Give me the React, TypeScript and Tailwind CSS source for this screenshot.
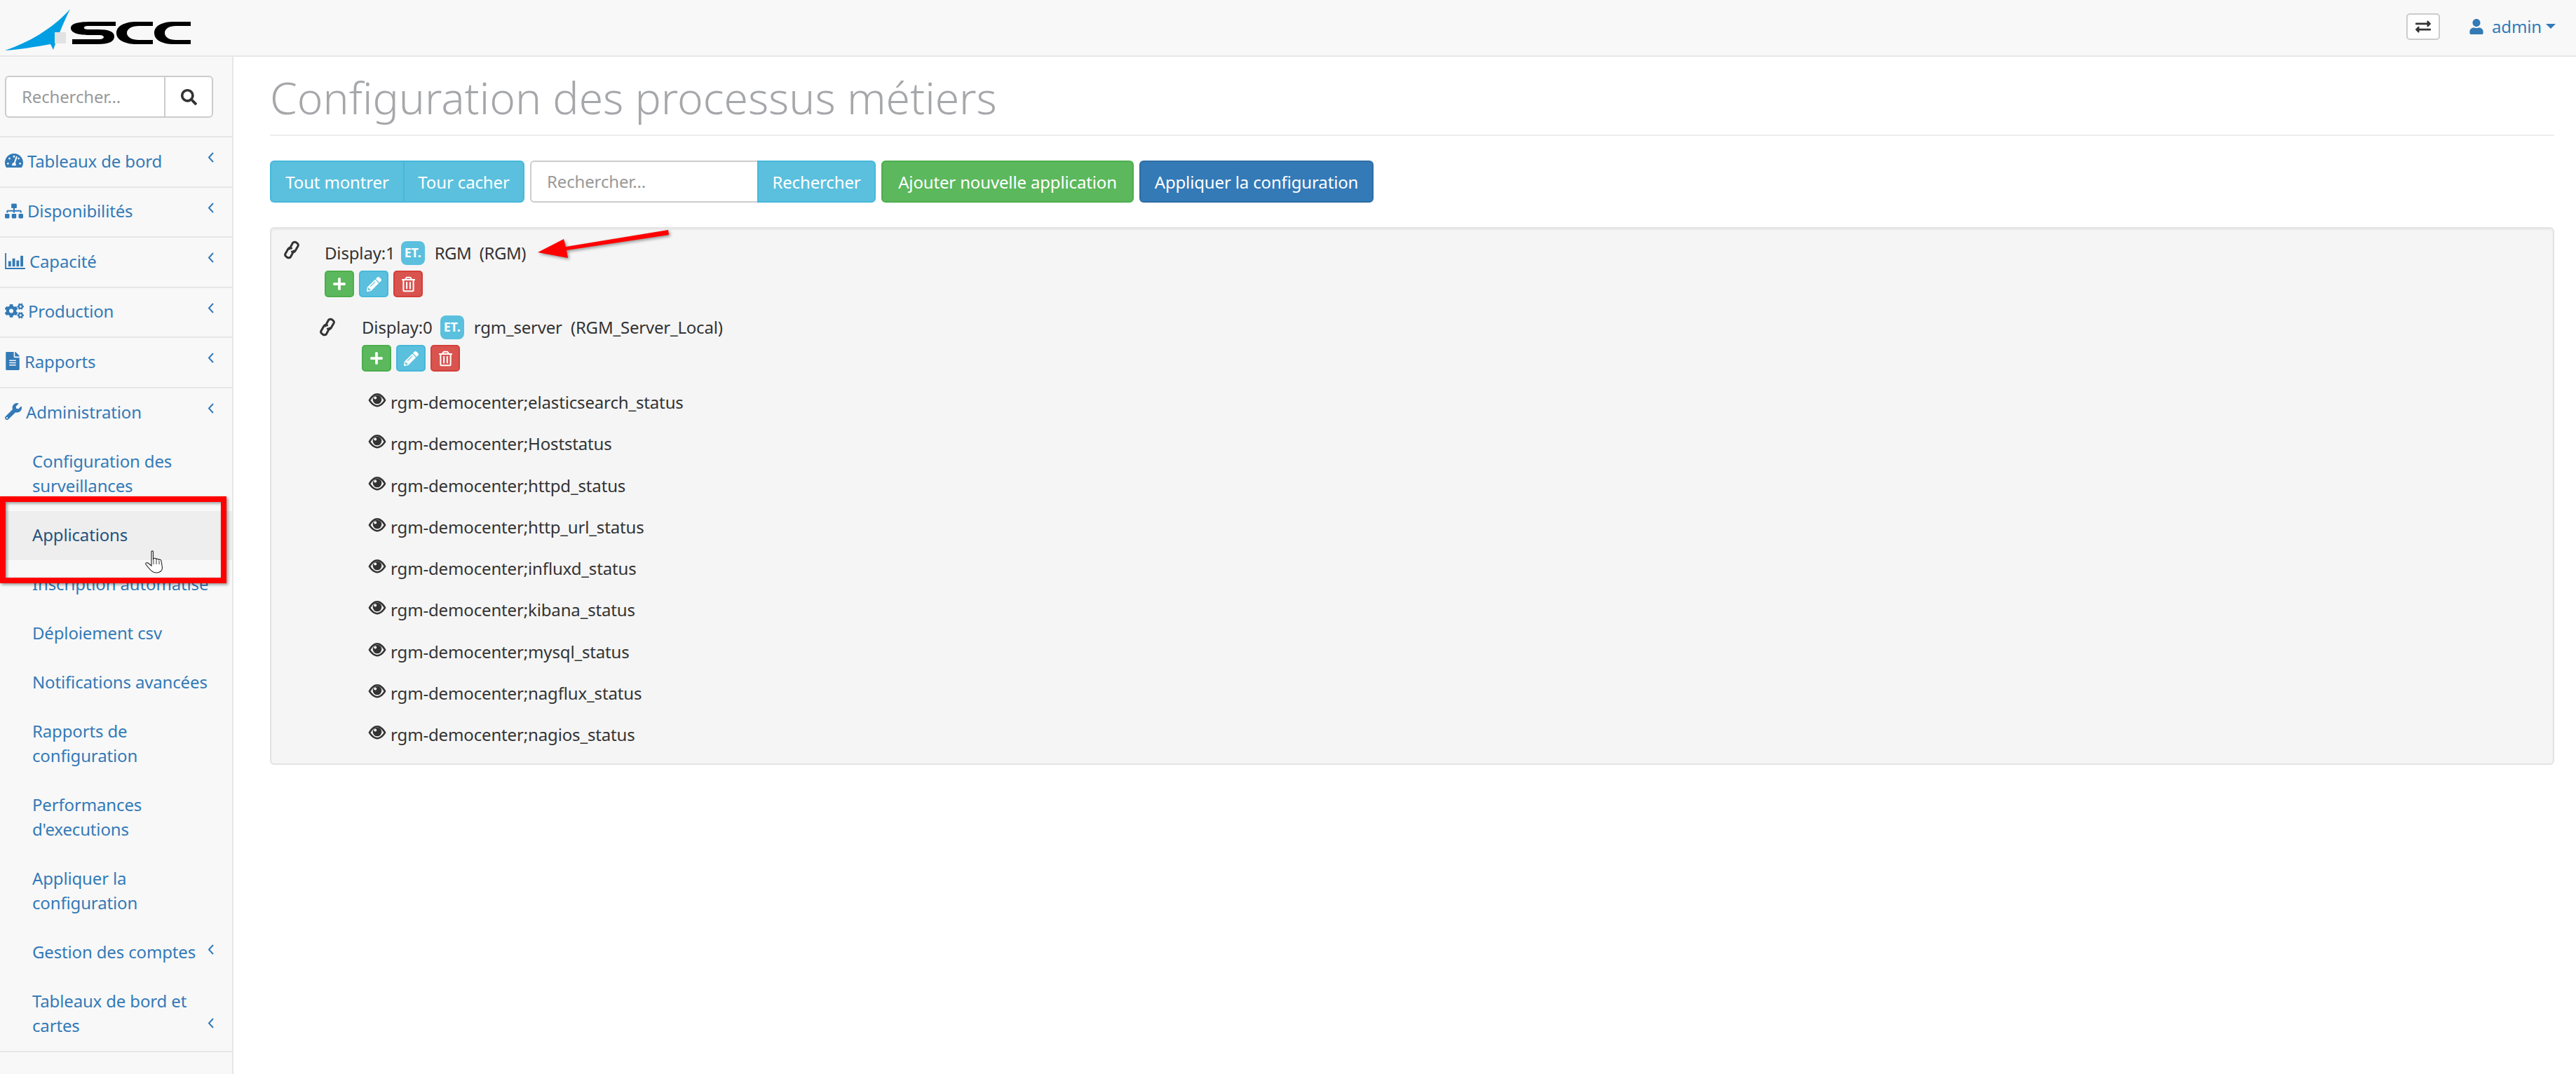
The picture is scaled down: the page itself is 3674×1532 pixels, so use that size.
import React from "react";
import {
  FaTachometerAlt, FaSitemap, FaCogs, FaFileAlt, FaWrench, FaSearch, FaUser, FaExchangeAlt,
  FaPlus, FaPencilAlt, FaRegTrashAlt,
} from "react-icons/fa";

const font = { fontFamily: '"Noto Sans", sans-serif' };

function BarIcon({ className }: { className?: string }) {
  return (
    <svg viewBox="0 0 30 24" className={className} fill="currentColor">
      <path d="M0 0h2v22h28v2H0z" />
      <rect x="5" y="12" width="4" height="8" />
      <rect x="11" y="8" width="4" height="12" />
      <rect x="17" y="11" width="4" height="9" />
      <rect x="23" y="4" width="4" height="16" />
    </svg>
  );
}

function Angle({ className }: { className?: string }) {
  return (
    <svg viewBox="0 0 9 15" className={`w-[9px] h-[15px] ${className ?? ""}`} fill="none" stroke="#337ab7" strokeWidth="2">
      <path d="M8 1 L2 7.5 L8 14" />
    </svg>
  );
}

function ChainIcon({ className }: { className?: string }) {
  return (
    <svg viewBox="0 0 22 27" className={`w-[22px] h-[27px] shrink-0 ${className ?? ""}`} fill="none" stroke="#333333" strokeWidth="3" strokeLinecap="round">
      <path d="M8 12 L12.5 3.5 Q14 1.5 17 2.5 L19.5 4.5 Q21 6 20 8 L16 15 Q14.5 17.5 11.5 16" />
      <path d="M14 15 L9.5 23.5 Q8 25.5 5 24.5 L2.5 22.5 Q1 21 2 19 L6 12 Q7.5 9.5 10.5 11" />
    </svg>
  );
}

function EyeIcon() {
  return (
    <svg viewBox="0 0 26 21" className="w-[26px] h-[21px] shrink-0 -mt-[6px]">
      <path d="M0.5 11 C4 4 9 1 13 1 C17 1 22 4 25.5 11 C22 17 17 20.5 13 20.5 C9 20.5 4 17 0.5 11Z" fill="#333333" />
      <path d="M3.5 11 C6.5 6 10 3.5 13 3.5 C16 3.5 19.5 6 22.5 11 C19.5 15.5 16 18 13 18 C10 18 6.5 15.5 3.5 11Z" fill="#f5f5f5" />
      <circle cx="13" cy="10" r="6.3" fill="#333333" />
      <circle cx="10.2" cy="7.6" r="2" fill="#f5f5f5" />
    </svg>
  );
}

function Logo() {
  return (
    <svg viewBox="0 0 280 70" className="w-[280px] h-[70px] shrink-0">
      <path d="M100 8 C90 28 82 48 76 66 L72 58 C50 62 25 66 7 67 C40 56 75 36 100 8Z" fill="#009fe3" />
      <rect x="78" y="41" width="16" height="16" fill="#e2e2e2" />
      <path d="M165 26 H130 C110 26 101 29 101 35 C101 42 112 45 128 45 H142 C150 45 150 51 142 51 H103 V58 H140 C156 58 163 54 163 47 C163 40 155 37 140 37 H125 C118 37 118 32 125 32 H165Z" fill="#000" />
      <path d="M218 26 H195 C178 26 166 32 166 42 C166 52 178 58 195 58 H218 V52 H198 C188 52 181 48 181 42 C181 36 188 32 198 32 H218Z" fill="#000" />
      <path d="M272 26 H248 C231 26 220 32 220 42 C220 52 231 58 248 58 H272 V52 H251 C241 52 235 48 235 42 C235 36 241 32 251 32 H272Z" fill="#000" />
    </svg>
  );
}

function TopItem({ icon, label }: { icon: React.ReactNode; label: string }) {
  return (
    <div className="h-[71.5px] pl-[7px] pr-[26px] pb-[3px] flex items-center justify-between text-[#337ab7] border-b-2 border-[#e7e7e7]">
      <span className="flex items-center gap-[6px]">
        {icon}
        <span>{label}</span>
      </span>
      <Angle className="-mt-[9px]" />
    </div>
  );
}

function SubItem({ children, active, chevron }: { children: React.ReactNode; active?: boolean; chevron?: boolean }) {
  return (
    <div className={`relative pl-[46px] pt-[16px] pb-[19px] leading-[35px] ${active ? "bg-[#eeeeee] text-[#23527c]" : "text-[#337ab7]"}`}>
      <div className="w-[262px]">{children}</div>
      {chevron && <Angle className="absolute right-[26px] bottom-[32px]" />}
    </div>
  );
}

function Sidebar() {
  return (
    <aside className="w-[333px] shrink-0 bg-[#f8f8f8] border-r-2 border-[#e7e7e7] relative">
      <div className="h-[115px] border-b-2 border-[#e7e7e7] px-[7px] pt-[27px]">
        <div className="flex h-[60px] w-[297px]">
          <div className="flex-1 bg-white border-2 border-[#cccccc] rounded-l-[6px] pl-[22px] pb-[2px] flex items-center text-[#999999]">Rechercher...</div>
          <div className="w-[68px] bg-white border-2 border-l-0 border-[#cccccc] rounded-r-[6px] flex items-center justify-center text-[#333333]">
            <FaSearch className="w-[23px] h-[23px]" />
          </div>
        </div>
      </div>
      <TopItem icon={<FaTachometerAlt className="w-[26px] h-[26px]" />} label="Tableaux de bord" />
      <TopItem icon={<FaSitemap className="w-[26px] h-[26px]" />} label="Disponibilités" />
      <TopItem icon={<BarIcon className="w-[29px] h-[23px]" />} label="Capacité" />
      <TopItem icon={<FaCogs className="w-[27px] h-[25px]" />} label="Production" />
      <TopItem icon={<FaFileAlt className="w-[22px] h-[26px]" />} label="Rapports" />
      <div className="h-[70.5px] pl-[7px] pr-[26px] pb-[3px] flex items-center justify-between text-[#337ab7]">
        <span className="flex items-center gap-[6px]">
          <FaWrench className="w-[24px] h-[24px]" />
          <span>Administration</span>
        </span>
        <Angle className="-mt-[9px]" />
      </div>
      <div className="border-b-2 border-[#e7e7e7]">
        <SubItem>Configuration des surveillances</SubItem>
        <SubItem active>Applications</SubItem>
        <SubItem>Inscription automatisé</SubItem>
        <SubItem>Déploiement csv</SubItem>
        <SubItem>Notifications avancées</SubItem>
        <SubItem>Rapports de configuration</SubItem>
        <SubItem>Performances d'executions</SubItem>
        <SubItem>Appliquer la configuration</SubItem>
        <SubItem chevron>Gestion des comptes</SubItem>
        <SubItem chevron>Tableaux de bord et cartes</SubItem>
      </div>
      {/* annotation: red frame */}
      <div className="absolute left-0 top-[627px] w-[323px] h-[124px] border-[8px] border-[#ff0000] shadow-[2px_2px_4px_rgba(0,0,0,0.4),inset_2px_2px_4px_rgba(0,0,0,0.4)]" />
      {/* annotation: cursor */}
      <svg viewBox="0 0 26 33" className="absolute left-[207px] top-[704px] w-[26px] h-[33px]">
        <path d="M9 2 C9 0.5 11.5 0.5 11.5 2 V13 L12.5 12 C13 11 15.5 11 15.8 12.5 C16.5 11.8 19 12 19.3 13.5 C20 12.8 22.8 13 23 15 L24.5 25 C24.5 29 21 32 16 32 C11 32 8 29 5 25 L1 20 C0 18 2 17 4 18 L9 22Z" fill="#fff" stroke="#222" strokeWidth="1.1" />
        <path d="M12 14v6M16 13v7M20 15v5" stroke="#222" strokeWidth="0.9" fill="none" />
      </svg>
    </aside>
  );
}

function Btn({ color, children }: { color: "green" | "blue" | "red"; children: React.ReactNode }) {
  const cls =
    color === "green"
      ? "bg-[#5cb85c] border-[#4cae4c]"
      : color === "blue"
      ? "bg-[#5bc0de] border-[#46b8da]"
      : "bg-[#d9534f] border-[#d43f3a]";
  return <span className={`w-[42px] h-[38px] rounded-[5px] border-2 flex items-center justify-center text-white ${cls}`}>{children}</span>;
}

function Actions() {
  return (
    <div className="flex gap-[7px]">
      <Btn color="green"><FaPlus className="w-[20px] h-[20px]" /></Btn>
      <Btn color="blue"><FaPencilAlt className="w-[21px] h-[21px]" /></Btn>
      <Btn color="red"><FaRegTrashAlt className="w-[19px] h-[23px]" /></Btn>
    </div>
  );
}

function Badge() {
  return (
    <span className="w-[34px] h-[34px] rounded-[8px] bg-[#5bc0de] text-white text-[18px] font-bold flex items-center justify-center">ET.</span>
  );
}

const services = [
  "elasticsearch_status", "Hoststatus", "httpd_status", "http_url_status", "influxd_status",
  "kibana_status", "mysql_status", "nagflux_status", "nagios_status",
];

function Tree() {
  return (
    <div className="bg-[#f5f5f5] border-2 border-[#e3e3e3] rounded-[6px] h-[767px] pl-[17px] pt-[17px] text-[#333333] shadow-[inset_0_2px_2px_rgba(0,0,0,0.05)]">
      <div className="flex">
        <ChainIcon className="ml-[1px]" />
        <div className="ml-[36px]">
          <div className="h-[35px] flex items-center">
            <span>Display:1</span>
            <span className="ml-[8px]"><Badge /></span>
            <span className="ml-[14px] whitespace-pre tracking-[-0.5px]">RGM  (RGM)</span>
          </div>
          <div className="mt-[8px]"><Actions /></div>
        </div>
      </div>
      <div className="flex ml-[52px] mt-[25px]">
        <ChainIcon className="mt-[4px]" />
        <div className="ml-[38px]">
          <div className="h-[35px] flex items-center">
            <span>Display:0</span>
            <span className="ml-[11px]"><Badge /></span>
            <span className="ml-[14px] whitespace-pre tracking-[-0.2px]">rgm_server  (RGM_Server_Local)</span>
          </div>
          <div className="mt-[8px]"><Actions /></div>
        </div>
      </div>
      <div className="ml-[121px] mt-[15px]">
        {services.map((s) => (
          <div key={s} className="h-[59.25px] pb-[2px] flex items-center gap-[6px]">
            <EyeIcon />
            <span>rgm-democenter;{s}</span>
          </div>
        ))}
      </div>
    </div>
  );
}

function Main() {
  return (
    <main className="flex-1 pl-[52px] pr-[31px] min-w-0 relative">
      <h1 className="h-[113px] border-b-2 border-[#eeeeee] text-[62.3px] tracking-normal font-light text-[#a6a7aa] leading-[115px] whitespace-nowrap">Configuration des processus métiers</h1>
      <div className="flex mt-[35px] h-[60px] mb-[35px]">
        <div className="flex text-white">
          <div className="w-[190px] bg-[#5bc0de] border-2 border-r-0 border-[#46b8da] rounded-l-[6px] flex items-center justify-center">Tout montrer</div>
          <div className="w-[173px] bg-[#5bc0de] border-2 border-[#46b8da] rounded-r-[6px] flex items-center justify-center">Tour cacher</div>
        </div>
        <div className="flex ml-[8px]">
          <div className="w-[324px] bg-white border-2 border-r-0 border-[#cccccc] rounded-l-[6px] pl-[22px] pb-[2px] flex items-center text-[#999999]">Rechercher...</div>
          <div className="w-[169px] bg-[#5bc0de] border-2 border-[#46b8da] rounded-r-[6px] text-white flex items-center justify-center">Rechercher</div>
        </div>
        <div className="ml-[8px] w-[360px] bg-[#5cb85c] border-2 border-[#4cae4c] rounded-[6px] text-white flex items-center justify-center">Ajouter nouvelle application</div>
        <div className="ml-[8px] w-[334px] bg-[#337ab7] border-2 border-[#2e6da4] rounded-[6px] text-white flex items-center justify-center">Appliquer la configuration</div>
      </div>
      <Tree />
      {/* annotation: arrow */}
      <svg viewBox="0 0 220 60" className="absolute left-[427px] top-[239px] w-[220px] h-[60px] drop-shadow-[2px_2px_2px_rgba(0,0,0,0.4)]">
        <path d="M7 40 L44 21 L47 32 L193 8 L194 15 L48 37 L50 48Z" fill="#ff0000" />
      </svg>
    </main>
  );
}

export default function App() {
  return (
    <div className="w-[3674px] h-[1532px] flex flex-col bg-white overflow-hidden text-[24px] tracking-[-0.15px] leading-[35px] text-[#333333]" style={font}>
      <header className="h-[81px] shrink-0 bg-[#f8f8f8] border-b-2 border-[#e7e7e7] flex items-center justify-between">
        <Logo />
        <div className="flex items-center pr-[29px] pb-[4px]">
          <div className="w-[48px] h-[38px] mr-[3px] bg-white border-2 border-[#cccccc] rounded-[5px] flex items-center justify-center text-[#333333]">
            <FaExchangeAlt className="w-[22px] h-[22px]" />
          </div>
          <FaUser className="ml-[39px] w-[20px] h-[22px] text-[#337ab7]" />
          <span className="ml-[12px] text-[#337ab7]">admin</span>
          <svg viewBox="0 0 14 7" className="ml-[6px] w-[14px] h-[7px]"><path d="M0 0H14L7 7Z" fill="#337ab7" /></svg>
        </div>
      </header>
      <div className="flex-1 flex min-h-0">
        <Sidebar />
        <Main />
      </div>
    </div>
  );
}
